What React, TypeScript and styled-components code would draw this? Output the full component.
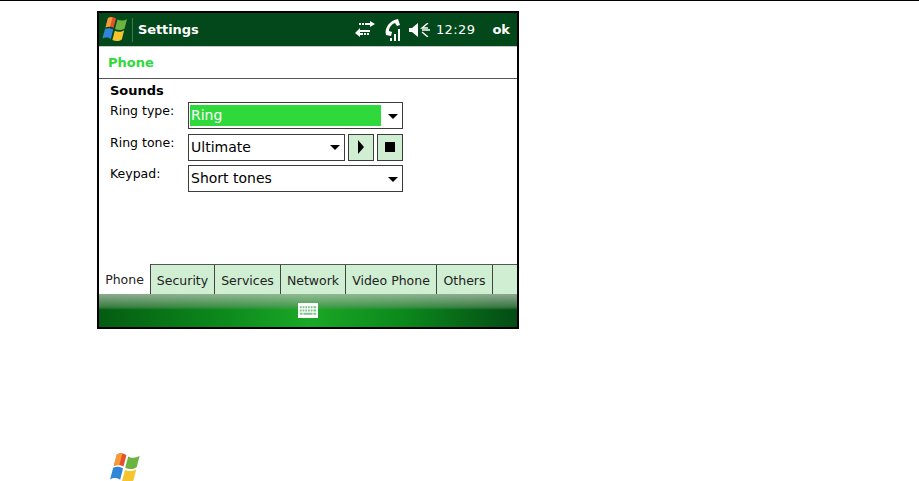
import styled, { createGlobalStyle } from 'styled-components';

const GlobalStyle = createGlobalStyle`
  html, body {
    margin: 0;
    padding: 0;
    background: #fff;
    font-family: "DejaVu Sans", "Liberation Sans", sans-serif;
  }`

const Page = styled.div`
  width: 919px;
  height: 481px;
  overflow: hidden;
  border-top: 1px solid #000;
  box-sizing: border-box;
  padding: 10px 0 0 97px;`

const Device = styled.div`
  width: 422px;
  height: 318px;
  box-sizing: border-box;
  border: 2px solid #000;
  display: flex;
  flex-direction: column;
  background: #fff;`

const TitleBar = styled.div`
  height: 34px;
  box-sizing: border-box;
  flex: none;
  background: #03481a;
  color: #fff;
  display: flex;
  align-items: center;
  padding: 0 7px 0 0;
  border-bottom: 1px solid #c8c8c8;`

const Divider = styled.div`
  width: 1px;
  height: 24px;
  margin: 0 5px 0 3px;
  background: #3d7a52;`

const TitleText = styled.div`
  font-size: 13px;
  font-weight: bold;
  letter-spacing: -0.1px;
  flex: 1;`

const StatusIcon = styled.svg<{ $gap: number }>`
  display: block;
  margin-right: ${p => p.$gap}px;`

const Clock = styled.div`
  font-size: 13px;
  letter-spacing: 0.4px;
  margin-right: 17px;`

const OkLabel = styled.div`
  font-size: 13px;
  font-weight: bold;`

const Heading = styled.div`
  height: 32px;
  flex: none;
  box-sizing: border-box;
  padding: 8px 0 0 9px;
  font-size: 13px;
  font-weight: bold;
  color: #2fd93b;
  border-bottom: 1px solid #555;`

const Content = styled.div`
  flex: 1;
  padding: 3px 0 0 11px;
  font-size: 12.5px;
  color: #000;`

const SectionTitle = styled.div`
  font-size: 13px;
  font-weight: bold;
  height: 20px;
  line-height: 17px;`

const Row = styled.div`
  display: flex;
  height: 27px;
  margin-bottom: 4.5px;`

const RowLabel = styled.div`
  width: 78px;
  padding-top: 1px;
  line-height: 16px;`

const Combo = styled.div<{ $width: number }>`
  width: ${p => p.$width}px;
  height: 27px;
  box-sizing: border-box;
  border: 1px solid #3c3c3c;
  padding: 2px 2px 2px 1px;
  display: flex;
  align-items: center;`

const ComboValue = styled.div<{ $selected?: boolean }>`
  flex: 1;
  height: 21px;
  line-height: 21px;
  font-size: 14px;
  padding-left: 1px;
  color: ${p => (p.$selected ? '#fff' : '#000')};
  background: ${p => (p.$selected ? '#2fd93b' : 'transparent')};`

const ComboArrow = styled.div`
  width: 0;
  height: 0;
  margin: 1px 2px 0 7px;
  border-left: 5px solid transparent;
  border-right: 5px solid transparent;
  border-top: 5px solid #000;`

const IconButton = styled.div`
  width: 26px;
  height: 27px;
  box-sizing: border-box;
  margin-left: 3px;
  border: 1px solid #3c3c3c;
  background: #cfeed2;
  display: flex;
  align-items: center;
  justify-content: center;`

const TabStrip = styled.div`
  height: 29px;
  flex: none;
  display: flex;
  font-size: 12.5px;
  background: #cfeed2;
  border-top: 1px solid #555;`

const Tab = styled.div<{ $width: number; $active?: boolean }>`
  width: ${p => p.$width}px;
  box-sizing: border-box;
  text-align: center;
  line-height: 31px;
  flex: none;
  color: #222;
  border-right: 1px solid #444;
  background: ${p => (p.$active ? '#fff' : '#cfeed2')};
  margin-top: ${p => (p.$active ? '-1px' : '0')};
  height: ${p => (p.$active ? '30px' : '29px')};`

const BottomBar = styled.div`
  height: 33px;
  flex: none;
  display: flex;
  justify-content: center;
  align-items: flex-start;
  padding-top: 9px;
  box-sizing: border-box;
  background:
    linear-gradient(to bottom, rgba(175,190,175,.8) 0, rgba(155,180,155,.7) 5px, rgba(100,150,105,.55) 13px, rgba(0,90,10,0) 16px),
    linear-gradient(to right, #045c12 0%, #0c8a1c 30%, #1aa826 50%, #0c8a1c 72%, #034c14 100%);`

const BigLogo = styled.div`
  margin: 122px 0 0 9px;`

function WindowsFlag({ size }: { size: number }) {
  return (
    <svg width={size} height={size} viewBox="0 0 30 30">
      <path d="M9 3 C12 1 15 2 17 3.5 L14.6 13 C12.5 11.5 9 11 6.5 12.5 Z" fill="#e8502a" />
      <path d="M9 3 C11 2 12 2 13.5 2.4 L11 12 C9.5 11.6 8 11.8 6.5 12.5 Z" fill="#f39c3a" />
      <path d="M18.5 4.5 C21 6 25 6 28 4 L25.6 13.5 C22.5 15.5 19 15.4 16 14 Z" fill="#6cb33f" />
      <path d="M6 14 C8.5 12.6 12 13 14.2 14.6 L11.8 24 C9.5 22.4 6 22 3.4 23.6 Z" fill="#2f86d8" />
      <path d="M15.8 15.8 C18.5 17 22 17.2 25.2 15.2 L22.8 24.6 C19.8 26.6 16 26.4 13.4 25 Z" fill="#f6c42c" />
    </svg>
  )
}

export default function App() {
  return (
    <Page>
      <GlobalStyle />
      <Device>
        <TitleBar>
          <WindowsFlag size={30} />
          <Divider />
          <TitleText>Settings</TitleText>
          <StatusIcon $gap={7} width="20" height="17" viewBox="0 0 20 17">
            <path d="M4 2h2v2H4zM7 2h2v2H7zM10 2h5V0l5 3-5 3V4h-5z" fill="#fff" />
            <path d="M5 9v2h10V9zM5 9V7L0 12l5 4v-2h3v-2H5zM9 12h2v2H9zM12 12h2v2h-2z" fill="#fff" />
          </StatusIcon>
          <StatusIcon $gap={8} width="19" height="22" viewBox="0 0 19 22">
            <path d="M16 0l2 6-3 1-2-3c-3 1-6 4-6 8l3 1-1 4-5-1C2 9 8 1 16 0z" fill="#fff" />
            <path d="M8 19h2v3H8zM12 15h2v7h-2zM16 10h2v12h-2z" fill="#fff" />
          </StatusIcon>
          <StatusIcon $gap={4} width="23" height="14" viewBox="0 0 23 14">
            <path d="M0 5h3l6-5v14l-6-5H0z" fill="#fff" />
            <path d="M19 0l-6 5h6M13 7h8M19 14l-6-5" stroke="#fff" strokeWidth="1.4" fill="none" />
          </StatusIcon>
          <Clock>12:29</Clock>
          <OkLabel>ok</OkLabel>
        </TitleBar>
        <Heading>Phone</Heading>
        <Content>
          <SectionTitle>Sounds</SectionTitle>
          <Row>
            <RowLabel>Ring type:</RowLabel>
            <Combo $width={215}>
              <ComboValue $selected>Ring</ComboValue>
              <ComboArrow />
            </Combo>
          </Row>
          <Row>
            <RowLabel>Ring tone:</RowLabel>
            <Combo $width={157}>
              <ComboValue>Ultimate</ComboValue>
              <ComboArrow />
            </Combo>
            <IconButton>
              <svg width="8" height="14" viewBox="0 0 8 14"><path d="M1 0l6 7-6 7z" fill="#000" /></svg>
            </IconButton>
            <IconButton>
              <svg width="10" height="10" viewBox="0 0 10 10"><path d="M0 0h10v10H0z" fill="#000" /></svg>
            </IconButton>
          </Row>
          <Row>
            <RowLabel>Keypad:</RowLabel>
            <Combo $width={215}>
              <ComboValue>Short tones</ComboValue>
              <ComboArrow />
            </Combo>
          </Row>
        </Content>
        <TabStrip>
          <Tab $width={52} $active>Phone</Tab>
          <Tab $width={64}>Security</Tab>
          <Tab $width={66}>Services</Tab>
          <Tab $width={65}>Network</Tab>
          <Tab $width={91}>Video Phone</Tab>
          <Tab $width={56}>Others</Tab>
        </TabStrip>
        <BottomBar>
          <svg width="20" height="15" viewBox="0 0 22 14" preserveAspectRatio="none">
            <path d="M0 0h22v14H0z" fill="#fff" />
            <path d="M2 3h2v2H2zM5 3h2v2H5zM8 3h2v2H8zM11 3h2v2h-2zM14 3h2v2h-2zM17 3h3v2h-3zM2 6h2v2H2zM5 6h2v2H5zM8 6h2v2H8zM11 6h2v2h-2zM14 6h2v2h-2zM17 6h3v2h-3zM2 9h3v2H2zM6 9h10v2H6zM17 9h3v2h-3z" fill="#7fc48a" />
          </svg>
        </BottomBar>
      </Device>
      <BigLogo>
        <WindowsFlag size={36} />
      </BigLogo>
    </Page>
  )
}
